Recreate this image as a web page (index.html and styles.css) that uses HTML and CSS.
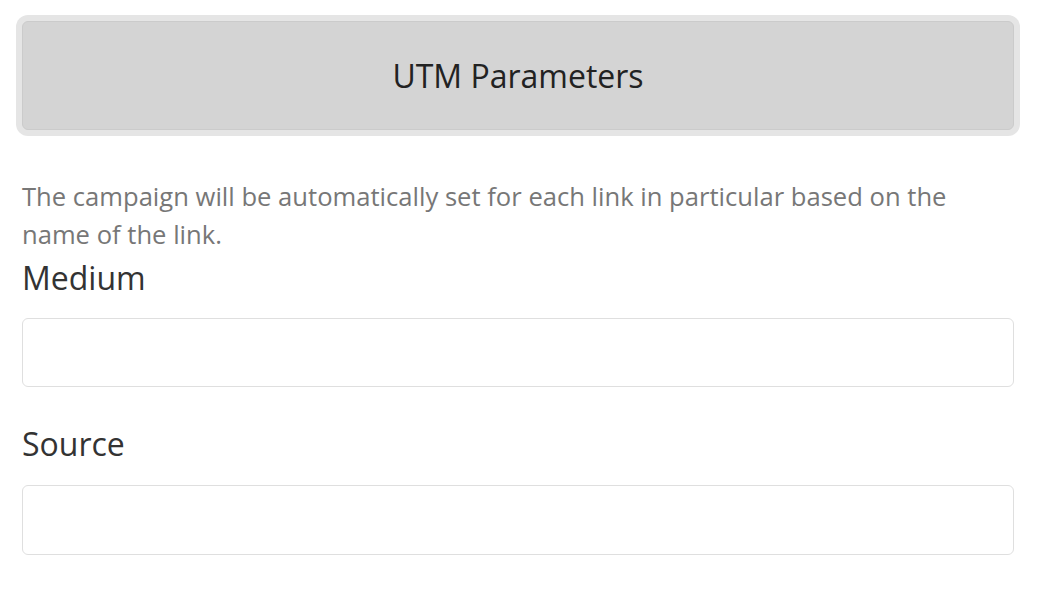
FILE: index.html
```html
<!DOCTYPE html>
<html lang="en">
<head>
<meta charset="utf-8">
<title>UTM Parameters</title>
<link rel="stylesheet" href="styles.css">
</head>
<body>
<div class="panel">
  <button class="utm-btn" type="button">UTM Parameters</button>
  <p class="help">The campaign will be automatically set for each link in particular based on the name of the link.</p>
  <div class="field">
    <label class="label" for="medium">Medium</label>
    <input class="input" id="medium" type="text">
  </div>
  <div class="field second">
    <label class="label" for="source">Source</label>
    <input class="input" id="source" type="text">
  </div>
</div>
</body>
</html>
```
FILE: styles.css
```css
html, body {
  margin: 0;
  padding: 0;
  background: #ffffff;
}
body {
  font-family: "Open Sans", "Liberation Sans", sans-serif;
}
.panel {
  padding: 21px 26px 0 22px;
  display: flex;
  flex-direction: column;
}
.utm-btn {
  height: 109px;
  width: 100%;
  background: #d4d4d4;
  border: 1px solid #cbcbcb;
  border-radius: 6px;
  box-shadow: 0 0 0 6px #e5e5e5;
  font-family: "Open Sans", "Liberation Sans", sans-serif;
  font-size: 32px;
  color: #222222;
  padding: 0;
  margin: 0;
}
.help {
  margin: 48px 0 0 0;
  font-size: 25.6px;
  line-height: 38px;
  color: #777777;
}
.field {
  display: flex;
  flex-direction: column;
  margin-top: 7px;
}
.field.second {
  margin-top: 40px;
}
.label {
  font-size: 32px;
  line-height: 34px;
  color: #333333;
  margin-bottom: 23px;
}
.second .label {
  margin-bottom: 24px;
}
.input {
  box-sizing: border-box;
  height: 69px;
  width: 100%;
  border: 1.5px solid #dfdfdf;
  border-radius: 6px;
  background: #ffffff;
  margin: 0;
  padding: 0 12px;
  font-size: 24px;
}
.second .input {
  height: 70px;
}
```
